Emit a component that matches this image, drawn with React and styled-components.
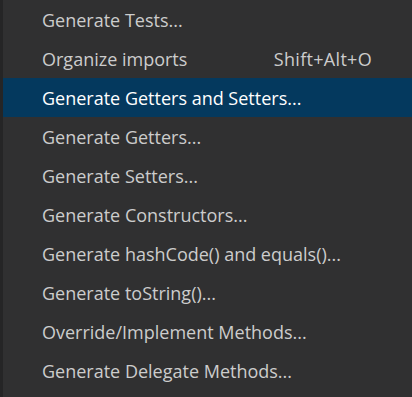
import React from "react";
import styled, { createGlobalStyle } from "styled-components";

const Global = createGlobalStyle`
  html, body { margin: 0; padding: 0; background: #252526; }
  body { width: 412px; height: 397px; overflow: hidden; }
`;

const Menu = styled.div`
  box-sizing: border-box;
  width: 412px;
  height: 397px;
  background: #303031;
  border-left: 3px solid #252526;
  display: flex;
  flex-direction: column;
  font-family: "Open Sans", "Noto Sans", sans-serif;
  font-size: 18px;
`;

const Item = styled.div`
  height: 39px;
  flex: none;
  display: flex;
  align-items: center;
  justify-content: space-between;
  padding: 0 40px 0 39px;
  background: ${(p) => (p.$active ? "#04395e" : "transparent")};
  color: ${(p) => (p.$active ? "#ffffff" : "#cccccc")};
`;

const Label = styled.span`
  white-space: nowrap;
`;

const Key = styled.span`
  white-space: nowrap;
  letter-spacing: 0.3px;
`;

const items = [
  { label: "Generate Tests..." },
  { label: "Organize imports", key: "Shift+Alt+O" },
  { label: "Generate Getters and Setters...", active: true },
  { label: "Generate Getters..." },
  { label: "Generate Setters..." },
  { label: "Generate Constructors..." },
  { label: "Generate hashCode() and equals()..." },
  { label: "Generate toString()..." },
  { label: "Override/Implement Methods..." },
  { label: "Generate Delegate Methods..." },
];

export default function App() {
  return (
    <>
      <Global />
      <Menu>
        {items.map((it) => (
          <Item key={it.label} $active={it.active}>
            <Label>{it.label}</Label>
            {it.key && <Key>{it.key}</Key>}
          </Item>
        ))}
      </Menu>
    </>
  );
}
